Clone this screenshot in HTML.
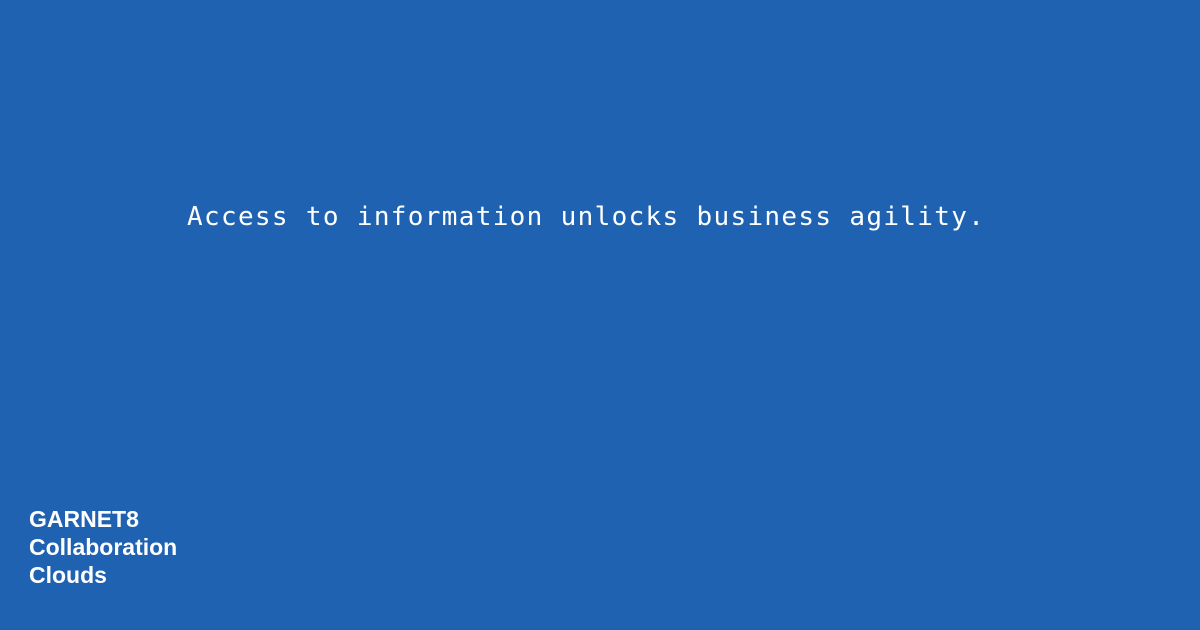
<!DOCTYPE html>
<html><head><meta charset="utf-8"><style>
html,body{margin:0;padding:0}
body{width:1200px;height:630px;background:#1f62b1;position:relative;overflow:hidden;color:#fff}
.t{position:absolute;left:187px;top:199px;font-family:"DejaVu Sans Mono","Liberation Mono",monospace;font-size:26px;line-height:36px;letter-spacing:1.33px;white-space:nowrap}
.b{position:absolute;left:29px;top:505px;font-family:"Liberation Sans",sans-serif;font-weight:bold;font-size:23px;line-height:28px}
</style></head><body>
<div class="t">Access to information unlocks business agility.</div>
<div class="b">GARNET8<br>Collaboration<br>Clouds</div>
</body></html>
